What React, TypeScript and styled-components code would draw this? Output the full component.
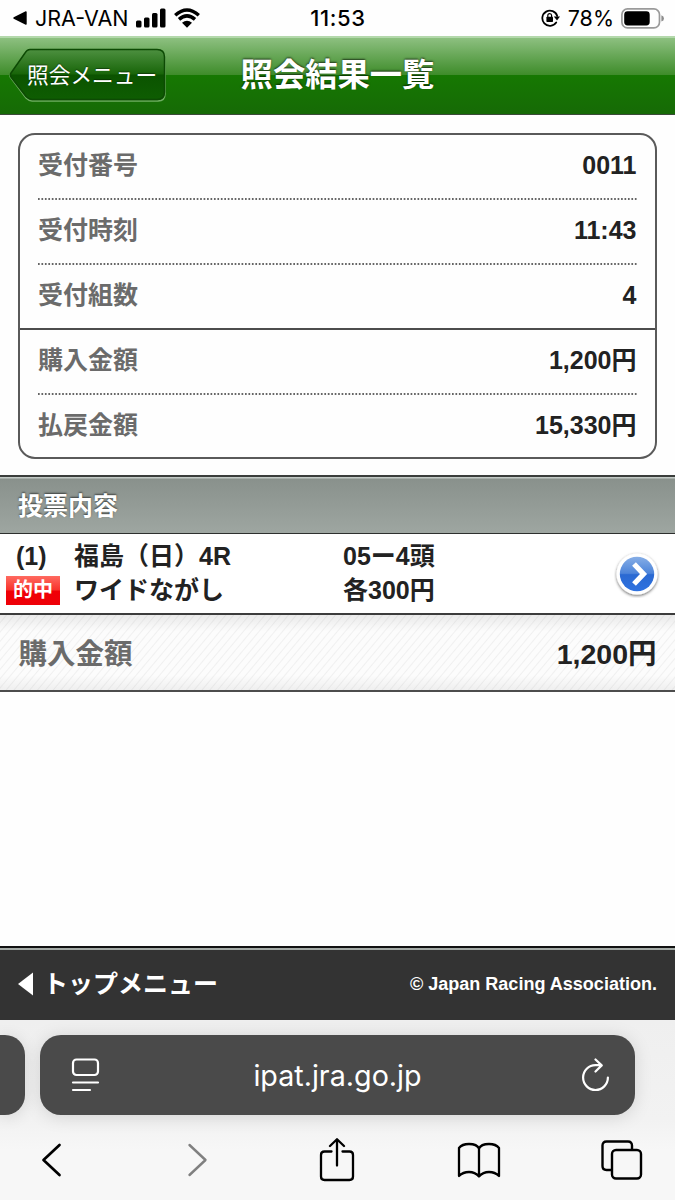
import React from 'react';
import styled, { createGlobalStyle, css } from 'styled-components';

const Global = createGlobalStyle`
  *, *::before, *::after { box-sizing: border-box; }
  html, body { margin: 0; padding: 0; background: #fff; }
  body { font-family: "Liberation Sans", "Noto Sans CJK JP", sans-serif; color: #222; -webkit-font-smoothing: antialiased; }
  svg { display: block; flex: none; }
`;

const Screen = styled.div`
  width: 675px;
  height: 1200px;
  display: flex;
  flex-direction: column;
  overflow: hidden;
  background: #fefefe;
`;

/* iOS status bar */
const StatusBar = styled.div`
  height: 36px;
  flex: none;
  display: grid;
  grid-template-columns: 1fr auto 1fr;
  align-items: center;
  padding: 0 11px 0 13px;
  font-family: Inter, "Liberation Sans", sans-serif;
  font-size: 21.5px;
  line-height: 36px;
  color: #000;
`;
const StatusSide = styled.div<{ $end?: boolean }>`
  display: flex;
  align-items: center;
  justify-content: ${p => (p.$end ? 'flex-end' : 'flex-start')};
`;
const AppName = styled.span`
  margin: 0 8px 0 8px;
`;
const Wifi = styled.svg`
  margin-left: 7px;
`;
const Clock = styled.span`
  margin-right: 1px;
  font-weight: 500;
  font-size: 22px;
  letter-spacing: 0.6px;
`;
const Percent = styled.span`
  margin: 0 7px 0 8px;
`;

/* Page header */
const Header = styled.header`
  height: 79px;
  flex: none;
  display: grid;
  grid-template-columns: 1fr auto 1fr;
  align-items: center;
  padding: 0 9px 2px;
  border-top: 2px solid #b3d8ab;
  border-bottom: 1px solid #3b4a39;
  background: linear-gradient(#8dc080 0, #3e8c2a 37px, #167802 37px, #166a06 100%);
`;
const BackButton = styled.button`
  position: relative;
  width: 158px;
  height: 55px;
  padding: 0;
  border: 0;
  background: none;
  color: #fff;
  font: 400 21.7px/53px "Liberation Sans", "Noto Sans CJK JP", sans-serif;
  text-align: left;
`;
const BackShape = styled.svg`
  position: absolute;
  inset: 0;
`;
const BackLabel = styled.span`
  position: relative;
  display: block;
  padding-left: 18px;
  white-space: nowrap;
  text-shadow: 0 -1px 1px rgba(0, 0, 0, 0.4);
`;
const Title = styled.h1`
  margin: 0;
  font-size: 32.3px;
  line-height: 72px;
  font-weight: 700;
  color: #fff;
  text-shadow: 0 -1px 2px rgba(0, 0, 0, 0.65);
`;

/* Receipt summary */
const Card = styled.section`
  margin: 18px 18px 16px;
  height: 326px;
  flex: none;
  display: flex;
  flex-direction: column;
  border: 2px solid #5a5a5a;
  border-radius: 17px;
`;
const CardGroup = styled.div<{ $divided?: boolean }>`
  padding: 0 18px;
  ${p => p.$divided && css`border-top: 2px solid #4c4c4c;`}
`;
const CardRow = styled.div<{ $last?: boolean }>`
  display: flex;
  justify-content: space-between;
  height: ${p => (p.$last ? 62 : 63)}px;
  line-height: 61px;
  font-size: 25px;
  font-weight: 700;
`;
const Label = styled.span`
  color: #6b6b6b;
`;
const Value = styled.span`
  color: #222;
  padding-right: 0.5px;
`;

const SectionTitle = styled.h2`
  flex: none;
  height: 59px;
  margin: 0;
  padding: 0 18px;
  border-top: 2px solid #3a3d3b;
  border-bottom: 1px solid #2d2f2e;
  background: linear-gradient(#c3cac6 0, #c3cac6 1px, #89918c 2px, #9ea6a1 100%);
  color: #fff;
  font-size: 25px;
  line-height: 58px;
  font-weight: 700;
  text-shadow: 0 -1px 2px rgba(0, 0, 0, 0.6);
`;

/* Bet entry */
const BetRow = styled.div`
  flex: none;
  height: 81px;
  display: grid;
  grid-template-columns: 68px 269px 1fr auto;
  padding: 5px 15px 0 6px;
  border-bottom: 2px solid #3c3c3c;
  font-size: 25px;
  line-height: 34px;
  font-weight: 700;
  background: #fff;
`;
const BetCell = styled.div`
  display: flex;
  flex-direction: column;
  white-space: nowrap;
`;
const BetIndex = styled.span`
  padding-left: 10px;
`;
const HitBadge = styled.span`
  width: 54px;
  height: 29px;
  margin-top: 3px;
  background: linear-gradient(#ff6a60 0, #f8332c 48%, #f00006 52%, #ee0008 100%);
  color: #fff;
  font-size: 20px;
  line-height: 29px;
  text-align: center;
`;
const ArrowSlot = styled.div`
  margin-top: 11px;
`;

const TotalRow = styled.div`
  flex: none;
  height: 77px;
  display: flex;
  justify-content: space-between;
  padding: 0 18.5px;
  border-bottom: 2px solid #4c4c4c;
  font-size: 28.5px;
  line-height: 78px;
  font-weight: 700;
  background:
    linear-gradient(rgba(0, 0, 0, 0.07), transparent 22%, transparent 80%, rgba(0, 0, 0, 0.05)),
    repeating-linear-gradient(130deg, #fcfcfc 0, #fcfcfc 4px, #f0f0f0 5px, #fcfcfc 6px);
`;

const Footer = styled.footer`
  flex: none;
  height: 74px;
  margin-top: auto;
  display: flex;
  align-items: center;
  justify-content: space-between;
  padding: 0 18px;
  border-top: 2px solid #111;
  background: linear-gradient(#a3aaa6 0, #a3aaa6 2px, #333 2px);
  color: #fff;
  font-weight: 700;
`;
const TopMenu = styled.a`
  display: flex;
  align-items: center;
  gap: 10px;
  font-size: 25px;
  line-height: 70px;
`;
const Copyright = styled.small`
  font-size: 18.05px;
  line-height: 70px;
`;

/* Safari chrome */
const Browser = styled.div`
  flex: none;
  height: 180px;
  display: flex;
  flex-direction: column;
  background: linear-gradient(#efefef, #f2f2f2 100px, #f7f7f7 130px);
`;
const Tabs = styled.div`
  display: grid;
  grid-template-columns: 25px 595px;
  column-gap: 15px;
  padding-top: 15px;
`;
const SideTab = styled.div`
  height: 80px;
  border-radius: 0 20px 20px 0;
  background: #4a4a4a;
  box-shadow: 0 2px 16px rgba(0, 0, 0, 0.12);
`;
const AddressBar = styled.div`
  height: 80px;
  display: grid;
  grid-template-columns: 29px 1fr 29px;
  align-items: center;
  padding: 0 25px 2px 31px;
  border-radius: 21px;
  background: #4a4a4a;
  box-shadow: 0 2px 18px rgba(0, 0, 0, 0.13);
  color: #fff;
  font: 400 28.7px/78px Inter, "Liberation Sans", sans-serif;
`;
const Domain = styled.span`
  padding: 2px 6px 0 0;
  text-align: center;
`;
const Toolbar = styled.nav`
  display: grid;
  grid-template-columns: 146px 132px 138px 144px 42px;
  align-items: center;
  height: 85px;
  padding: 5px 0 0 41px;
`;

function Dots() {
  return (
    <svg width="599" height="2" viewBox="0 0 599 2">
      <path d="M0 1H599" stroke="#333" strokeWidth="1.5" strokeDasharray="1.7 1.75" />
    </svg>
  );
}

function Row({ label, value, last }: { label: string; value: string; last?: boolean }) {
  return (
    <CardRow $last={last}>
      <Label>{label}</Label>
      <Value>{value}</Value>
    </CardRow>
  );
}

export default function App() {
  return (
    <Screen>
      <Global />
      <StatusBar>
        <StatusSide>
          <svg width="14" height="14" viewBox="0 0 14 14">
            <path d="M1 7L13 1V13Z" fill="#000" stroke="#000" strokeWidth="1.4" strokeLinejoin="round" />
          </svg>
          <AppName>JRA-VAN</AppName>
          <svg width="30" height="20" viewBox="0 0 30 20">
            <rect x="0" y="12.5" width="5.5" height="7" rx="1.5" />
            <rect x="8" y="9.5" width="5.5" height="10" rx="1.5" />
            <rect x="16" y="5" width="5.5" height="14.5" rx="1.5" />
            <rect x="24" y="0.5" width="5.5" height="19" rx="1.5" />
          </svg>
          <Wifi width="28" height="20" viewBox="0 0 28 20">
            <path d="M2.2 7.2Q14 -3.2 25.8 7.2M6 11.4Q14 4.4 22 11.4" fill="none" stroke="#000" strokeWidth="3.5" />
            <path d="M9 14.8Q14 10.6 19 14.8L14 19.8Z" />
          </Wifi>
        </StatusSide>
        <Clock>11:53</Clock>
        <StatusSide $end>
          <svg width="19" height="18" viewBox="0 0 19 18">
            <path d="M15.2 13.5A7.6 7.6 0 1 1 16.2 7" fill="none" stroke="#000" strokeWidth="1.8" strokeLinecap="round" />
            <path d="M12.8 7.4H19L16 11.4Z" />
            <rect x="5.4" y="7.8" width="6.6" height="5.2" rx="0.7" />
            <path d="M6.8 8V6.6a1.9 1.9 0 0 1 3.8 0V8" fill="none" stroke="#000" strokeWidth="1.2" />
          </svg>
          <Percent>78%</Percent>
          <svg width="43" height="21" viewBox="0 0 43 21">
            <rect x="0.9" y="0.9" width="37.6" height="19" rx="5.6" fill="none" stroke="#9a9a9a" strokeWidth="1.7" />
            <rect x="3.2" y="3.3" width="25.5" height="14.2" rx="3.4" />
            <path d="M40.4 7.2Q43 8.2 43 10.4T40.4 13.6Z" fill="#8c8c8c" />
          </svg>
        </StatusSide>
      </StatusBar>

      <Header>
        <BackButton>
          <BackShape width="158" height="55" viewBox="0 0 158 55">
            <defs>
              <linearGradient id="back" x1="0" y1="0" x2="0" y2="1">
                <stop offset="0" stopColor="#4d9040" />
                <stop offset="0.49" stopColor="#186509" />
                <stop offset="0.51" stopColor="#0b5300" />
                <stop offset="1" stopColor="#0e5d02" />
              </linearGradient>
            </defs>
            <path d="M20 2.5H149Q156 2.5 156 9.5V46Q156 53 149 53H23Q20 53 17 50L2 30Q0 28 2 26L15 6Q17 2.5 20 2.5Z" fill="none" stroke="#6fae62" strokeWidth="1.5" />
            <path d="M21 1.5H148Q155.500 1.500 155.500 9V44Q155.500 51.500 148 51.500H23Q20 51.500 17 48.500L2 29Q0.800 27 2 25L16 5Q18 1.500 21 1.500Z" fill="url(#back)" stroke="#0d4a04" strokeWidth="1.5" />
          </BackShape>
          <BackLabel>照会メニュー</BackLabel>
        </BackButton>
        <Title>照会結果一覧</Title>
        <span />
      </Header>

      <Card>
        <CardGroup>
          <Row label="受付番号" value="0011" />
          <Dots />
          <Row label="受付時刻" value="11:43" />
          <Dots />
          <Row label="受付組数" value="4" />
        </CardGroup>
        <CardGroup $divided>
          <Row label="購入金額" value="1,200円" />
          <Dots />
          <Row label="払戻金額" value="15,330円" last />
        </CardGroup>
      </Card>

      <SectionTitle>投票内容</SectionTitle>
      <BetRow>
        <BetCell>
          <BetIndex>(1)</BetIndex>
          <HitBadge>的中</HitBadge>
        </BetCell>
        <BetCell>
          <span>福島（日）4R</span>
          <span>ワイドながし</span>
        </BetCell>
        <BetCell>
          <span>05ー4頭</span>
          <span>各300円</span>
        </BetCell>
        <ArrowSlot>
          <svg width="46" height="48" viewBox="0 0 46 48">
            <defs>
              <linearGradient id="blue" x1="0" y1="0" x2="0" y2="1">
                <stop offset="0" stopColor="#86aee6" />
                <stop offset="0.48" stopColor="#4d84da" />
                <stop offset="0.52" stopColor="#2a69d2" />
                <stop offset="1" stopColor="#2f72e0" />
              </linearGradient>
              <filter id="drop" x="-20%" y="-20%" width="140%" height="140%">
                <feDropShadow dx="0" dy="1.2" stdDeviation="1.5" floodOpacity="0.6" />
              </filter>
            </defs>
            <circle cx="23" cy="24" r="20.5" fill="#fff" filter="url(#drop)" />
            <circle cx="23" cy="24" r="17.2" fill="url(#blue)" />
            <path d="M20 14L29.5 24L20 34" fill="none" stroke="#fff" strokeWidth="5.2" />
          </svg>
        </ArrowSlot>
      </BetRow>
      <TotalRow>
        <Label>購入金額</Label>
        <span>1,200円</span>
      </TotalRow>

      <Footer>
        <TopMenu>
          <svg width="15" height="24" viewBox="0 0 15 24"><path d="M0 12L15 0.5V23.5Z" fill="#fff" /></svg>
          トップメニュー
        </TopMenu>
        <Copyright>© Japan Racing Association.</Copyright>
      </Footer>

      <Browser>
        <Tabs>
          <SideTab />
          <AddressBar>
            <svg width="29" height="34" viewBox="0 0 29 34" fill="none" stroke="#fff" strokeWidth="2.2" strokeLinecap="round">
              <rect x="2" y="1.5" width="25" height="15.5" rx="3.5" />
              <path d="M2 24.5H27M2 32H19" />
            </svg>
            <Domain>ipat.jra.go.jp</Domain>
            <svg width="29" height="34" viewBox="0 0 29 34" fill="none" stroke="#fff" strokeWidth="2.2" strokeLinecap="round" strokeLinejoin="round">
              <path d="M20 7.2H14.5A12.4 12.4 0 1 0 26.9 19.6M14.5 1.500L20.700 7.400L14.500 13.500" />
            </svg>
          </AddressBar>
        </Tabs>
        <Toolbar>
          <svg width="21" height="34" viewBox="0 0 21 34" fill="none" stroke="#000" strokeWidth="2.7" strokeLinecap="round" strokeLinejoin="round"><path d="M18.5 2L2.5 17L18.5 32" /></svg>
          <svg width="21" height="34" viewBox="0 0 21 34" fill="none" stroke="#808080" strokeWidth="2.4" strokeLinecap="round" strokeLinejoin="round"><path d="M2.5 2L18.5 17L2.5 32" /></svg>
          <svg width="36" height="44" viewBox="0 0 36 44" fill="none" stroke="#000" strokeWidth="2.3" strokeLinecap="round" strokeLinejoin="round">
            <path d="M12.5 13.5H5.5Q2 13.5 2 17V38.500Q2 42 5.500 42H30.500Q34 42 34 38.500V17Q34 13.500 30.500 13.500H23.500M18 27.500V1.500M11 8L18 1.200L25 8" />
          </svg>
          <svg width="44" height="36" viewBox="0 0 44 36" fill="none" stroke="#000" strokeWidth="2.3" strokeLinejoin="round" strokeLinecap="round">
            <path d="M22 6.5Q20 2 12 2Q5 2 2 6V34Q6 30 12 30Q18 30 22 34.5Q26 30 32 30Q38 30 42 34V6Q39 2 32 2Q24 2 22 6.5V34" />
          </svg>
          <svg width="42" height="40" viewBox="0 0 42 40" fill="none" stroke="#000" strokeWidth="2.4">
            <path d="M31 10V5.5Q31 1.5 27 1.5H5.5Q1.5 1.5 1.5 5.5V26Q1.5 30 5.5 30H10.5" />
            <rect x="11" y="10" width="29" height="28.5" rx="4" />
          </svg>
        </Toolbar>
      </Browser>
    </Screen>
  );
}
